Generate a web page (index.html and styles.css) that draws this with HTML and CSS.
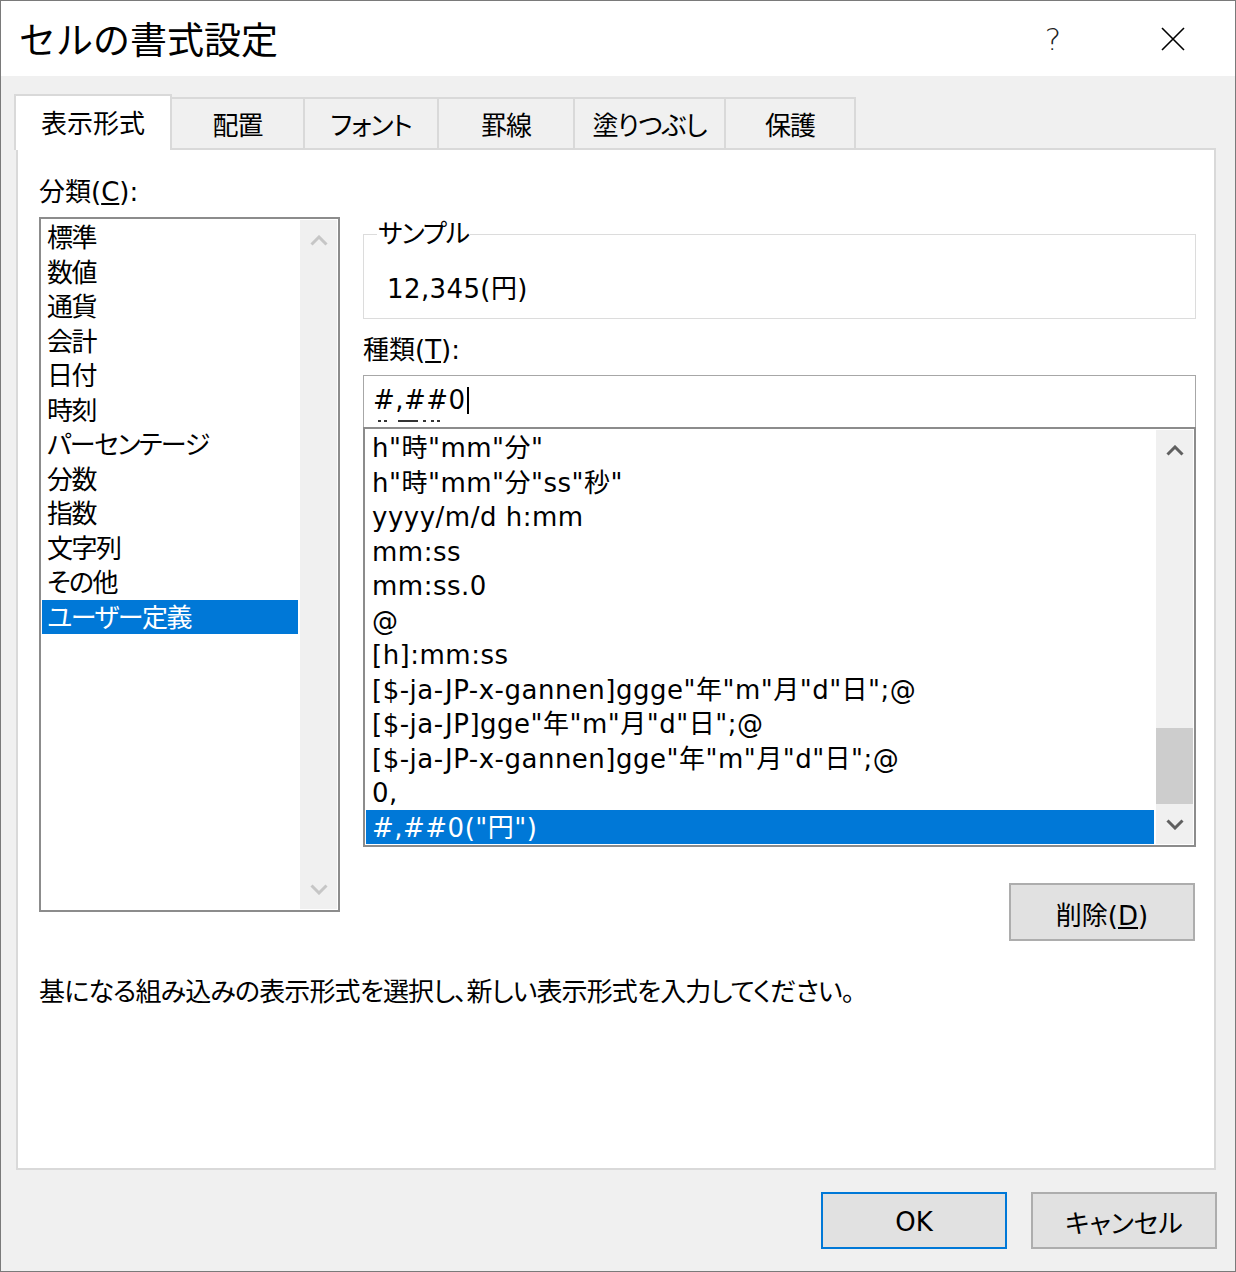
FILE: index.html
```html
<!DOCTYPE html>
<html lang="ja">

<head>
    <meta charset="UTF-8">
    <title>セルの書式設定</title>
    <link rel="stylesheet" href="styles.css">
</head>

<body>
    <div class="window">

        <!-- Title bar -->
        <header class="titlebar">
            <h1 class="title">セルの書式設定</h1>
            <div class="title-controls">
                <span class="help-btn">?</span>
                <span class="close-btn">
                    <svg width="24" height="24" viewBox="0 0 24 24">
                        <path d="M1 1 L23 23 M23 1 L1 23" stroke="#000" stroke-width="1.6" fill="none" />
                    </svg>
                </span>
            </div>
        </header>

        <main class="dialog-body">
            <!-- Tabs -->
            <nav class="tabs">
                <div class="tab active">表示形式</div>
                <div class="tab">配置</div>
                <div class="tab">フォント</div>
                <div class="tab">罫線</div>
                <div class="tab">塗りつぶし</div>
                <div class="tab">保護</div>
            </nav>

            <section class="panel">
                <div class="format-grid">
                    <div class="field-label category-label">分類(<u>C</u>):</div>

                    <!-- Category list -->
                    <div class="listbox category-list">
                        <ul class="list-items">
                            <li>標準</li>
                            <li>数値</li>
                            <li>通貨</li>
                            <li>会計</li>
                            <li>日付</li>
                            <li>時刻</li>
                            <li>パーセンテージ</li>
                            <li>分数</li>
                            <li>指数</li>
                            <li>文字列</li>
                            <li>その他</li>
                            <li class="selected">ユーザー定義</li>
                        </ul>
                        <div class="scrollbar disabled">
                            <span class="scroll-btn">
                                <svg width="18" height="11" viewBox="0 0 18 11"><polyline points="1.5,9.5 9,2 16.5,9.5" /></svg>
                            </span>
                            <span class="scroll-track"></span>
                            <span class="scroll-btn">
                                <svg width="18" height="11" viewBox="0 0 18 11"><polyline points="1.5,1.5 9,9 16.5,1.5" /></svg>
                            </span>
                        </div>
                    </div>

                    <div class="right-col">
                        <fieldset class="sample">
                            <legend>サンプル</legend>
                            <div class="sample-value">12,345(円)</div>
                        </fieldset>

                        <div class="field-label type-label">種類(<u>T</u>):</div>
                        <div class="type-input">
                            <div class="type-text">#,##0<span class="caret"></span></div>
                            <!-- tops of the row hidden under the edit box -->
                            <svg class="ghost-row" width="70" height="4" viewBox="0 0 70 4">
                                <rect x="5" y="1" width="3" height="2" />
                                <rect x="11" y="1" width="3" height="2" />
                                <rect x="25" y="1" width="20" height="2" />
                                <rect x="50" y="1" width="3" height="2" />
                                <rect x="58" y="1" width="3" height="2" />
                                <rect x="64" y="1" width="3" height="2" />
                            </svg>
                        </div>

                        <!-- Format list -->
                        <div class="listbox type-list">
                            <ul class="list-items">
                                <li>h"時"mm"分"</li>
                                <li>h"時"mm"分"ss"秒"</li>
                                <li>yyyy/m/d h:mm</li>
                                <li>mm:ss</li>
                                <li>mm:ss.0</li>
                                <li>@</li>
                                <li>[h]:mm:ss</li>
                                <li>[$-ja-JP-x-gannen]ggge"年"m"月"d"日";@</li>
                                <li>[$-ja-JP]gge"年"m"月"d"日";@</li>
                                <li>[$-ja-JP-x-gannen]gge"年"m"月"d"日";@</li>
                                <li>0,</li>
                                <li class="selected">#,##0("円")</li>
                            </ul>
                            <div class="scrollbar">
                                <span class="scroll-btn">
                                    <svg width="18" height="11" viewBox="0 0 18 11"><polyline points="1.5,9.5 9,2 16.5,9.5" /></svg>
                                </span>
                                <span class="scroll-track"><span class="scroll-thumb"></span></span>
                                <span class="scroll-btn">
                                    <svg width="18" height="11" viewBox="0 0 18 11"><polyline points="1.5,1.5 9,9 16.5,1.5" /></svg>
                                </span>
                            </div>
                        </div>

                        <div class="delete-row">
                            <button class="btn">削除(<u>D</u>)</button>
                        </div>
                    </div>
                </div>

                <p class="description">基になる組み込みの表示形式を選択し、新しい表示形式を入力してください。</p>
            </section>
        </main>

        <!-- Dialog buttons -->
        <footer class="dialog-buttons">
            <button class="btn default">OK</button>
            <button class="btn">キャンセル</button>
        </footer>
    </div>
</body>

</html>
```

FILE: styles.css
```css
* {
    box-sizing: border-box;
}

body {
    margin: 0;
    background: #fff;
    color: #000;
    font-family: "DejaVu Sans", "Noto Sans CJK JP", sans-serif;
    font-size: 26px;
    font-feature-settings: "palt";
}

/*--------------Window-------------*/
.window {
    width: 1236px;
    height: 1272px;
    border: 1px solid #7a7a7a;
    background: #f0f0f0;
    display: flex;
    flex-direction: column;
}

.titlebar {
    height: 75px;
    flex: none;
    background: #fff;
    display: flex;
    align-items: center;
    padding-left: 18px;
}

.title {
    flex: 1;
    margin: 0;
    font-family: "Noto Sans CJK JP", sans-serif;
    font-size: 37px;
    font-weight: normal;
    font-feature-settings: normal;
    line-height: 1;
}

.title-controls {
    display: flex;
    align-items: center;
}

.help-btn {
    width: 116px;
    text-align: center;
    font-size: 31px;
    font-weight: 200;
    color: #222;
}

.close-btn {
    width: 124px;
    display: flex;
    justify-content: center;
}

/*--------------Tabs-------------*/
.dialog-body {
    flex: 1;
    display: flex;
    flex-direction: column;
    padding: 18px 19px 0 15px;
}

.tabs {
    display: grid;
    grid-template-columns: 158px 131px 134px 136px 151px 132px;
    align-items: end;
    margin-left: -2px;
    margin-bottom: -2px;
}

.tab {
    height: 53px;
    background: #f0f0f0;
    border-top: 2px solid #d9d9d9;
    border-left: 2px solid #d9d9d9;
    text-align: center;
    line-height: 30px;
    padding-top: 12px;
    letter-spacing: -1px;
}

.tab:last-child {
    border-right: 2px solid #d9d9d9;
}

.tab.active {
    height: 56px;
    background: #fff;
    border-right: 2px solid #d9d9d9;
    padding-top: 13px;
    letter-spacing: 0;
    position: relative;
    z-index: 1;
}

.tab.active + .tab {
    border-left: none;
}

/*--------------Panel-------------*/
.panel {
    flex: 1;
    background: #fff;
    border: 2px solid #d9d9d9;
    padding: 27px 0 0 21px;
}

.format-grid {
    display: grid;
    grid-template-columns: 301px 833px;
    grid-template-rows: auto auto;
    column-gap: 23px;
    row-gap: 10px;
}

.field-label {
    line-height: 30px;
}

.category-label {
    grid-column: 1;
    grid-row: 1;
}

.category-list {
    grid-column: 1;
    grid-row: 2;
    height: 695px;
}

.right-col {
    grid-column: 2;
    grid-row: 2;
}

/* List boxes */
.listbox {
    display: flex;
    border: 2px solid #8c8c8c;
    padding: 1px;
    background: #fff;
}

.list-items {
    flex: 1;
    margin: 0;
    padding: 0;
    list-style: none;
    overflow: hidden;
}

.list-items li {
    height: 34.5px;
    padding-top: 2px;
    line-height: 32.5px;
    white-space: pre;
}

.category-list .list-items li {
    padding-left: 5px;
    letter-spacing: -1.5px;
}

.type-list .list-items li {
    padding-left: 6px;
    letter-spacing: 0.5px;
}

.list-items li.selected {
    background: #0078d7;
    color: #fff;
}

/* Scrollbars */
.scrollbar {
    width: 37px;
    margin-left: 2px;
    background: #f0f0f0;
    display: flex;
    flex-direction: column;
}

.scroll-btn {
    height: 40px;
    display: flex;
    align-items: center;
    justify-content: center;
}

.scroll-btn polyline {
    fill: none;
    stroke: #606060;
    stroke-width: 3;
}

.scrollbar.disabled .scroll-btn polyline {
    stroke: #c6c6c6;
}

.scroll-track {
    flex: 1;
    display: flex;
    flex-direction: column;
    justify-content: flex-end;
}

.scroll-thumb {
    height: 76px;
    background: #cdcdcd;
}

/* Sample box */
.sample {
    margin: 2px 0 0;
    padding: 0 0 14px 13px;
    border: 1px solid #dcdcdc;
    min-width: 0;
}

.sample legend {
    padding: 0 1px;
    line-height: 30px;
    letter-spacing: -1px;
}

.sample-value {
    margin-top: 25px;
    padding-left: 10px;
    line-height: 30px;
    letter-spacing: 0.4px;
}

.type-label {
    margin-top: 16px;
}

/* Type input */
.type-input {
    margin-top: 10px;
    height: 52px;
    border: 1px solid #a7a7a7;
    border-bottom: none;
    padding: 9px 0 0 9px;
    overflow: hidden;
}

.type-text {
    line-height: 30px;
    letter-spacing: 0.5px;
}

.caret {
    display: inline-block;
    width: 2px;
    height: 27px;
    margin-left: 1px;
    background: #000;
    vertical-align: -5px;
}

.ghost-row {
    display: block;
    margin-top: 4px;
    fill: #333;
}

.type-list {
    height: 420px;
}

/* Buttons */
.delete-row {
    display: flex;
    justify-content: flex-end;
    margin-top: 36px;
    padding-right: 1px;
}

.btn {
    width: 186px;
    height: 58px;
    border: 2px solid #adadad;
    background: #e1e1e1;
    font: inherit;
    color: #000;
    padding: 2px 0 0;
}

.btn.default {
    border-color: #0078d7;
}

.description {
    margin: 36px 0 0;
    line-height: 30px;
    letter-spacing: -0.85px;
}

.dialog-buttons {
    height: 101px;
    flex: none;
    display: flex;
    justify-content: flex-end;
    gap: 24px;
    padding: 22px 18px 0 0;
}

.dialog-buttons .btn {
    height: 57px;
}
```
